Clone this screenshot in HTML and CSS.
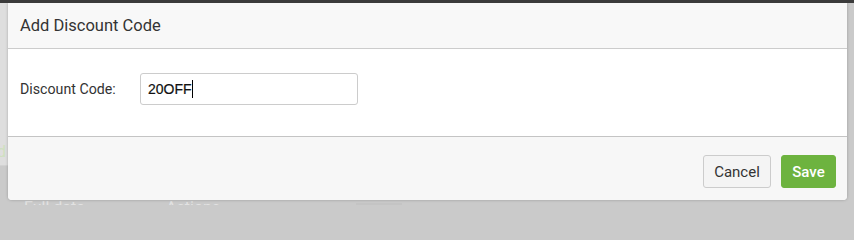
FILE: index.html
```html
<!DOCTYPE html>
<html>
<head>
<meta charset="utf-8">
<link rel="stylesheet" href="styles.css">
</head>
<body>
<div class="topbar"></div>
<div class="backdrop">
  <div class="bg-content">
    <div class="bg-row"><span class="bg-green">d</span></div>
    <div class="bg-head"><span class="bg-col1">Full date</span><span class="bg-col2">Actions</span><span class="bg-block"></span></div>
  </div>
  <div class="modal">
    <div class="modal-header">Add Discount Code</div>
    <div class="modal-body">
      <label class="field-label" for="code">Discount Code:</label>
      <div class="input"><span class="input-text">20OFF</span><span class="caret"></span></div>
    </div>
    <div class="modal-footer">
      <button class="btn btn-cancel">Cancel</button>
      <button class="btn btn-save">Save</button>
    </div>
  </div>
</div>
</body>
</html>
```
FILE: styles.css
```css
html, body {
  margin: 0;
  padding: 0;
}
html {
  height: 205px;
  overflow: hidden;
  background: #cacaca;
}
body {
  width: 854px;
  height: 205px;
  overflow: hidden;
  background: #cacaca;
  font-family: Roboto, "Liberation Sans", sans-serif;
}
.topbar {
  height: 3px;
  background: #3b3b3b;
}
.backdrop {
  position: relative;
  height: 202px;
  overflow: hidden;
  background: #cacaca;
}
.bg-content {
  height: 100%;
}
.bg-row {
  height: 162px;
  width: 8px;
  background: #dedede;
  border-bottom: 1px solid #d2d2d2;
  display: flex;
  align-items: flex-end;
  overflow: hidden;
}
.bg-green {
  color: #cfe0c0;
  font-size: 16px;
  line-height: 16px;
  margin-left: -3px;
  margin-bottom: 5px;
}
.bg-head {
  display: flex;
  align-items: flex-start;
  padding-top: 34px;
  color: #e2e2e2;
  font-size: 16px;
  line-height: 16px;
}
.bg-col1 {
  margin-left: 24px;
  width: 142px;
}
.bg-col2 {
  width: 190px;
}
.bg-block {
  width: 46px;
  height: 10px;
  margin-top: 3px;
  background: #c4c4c4;
}
.modal {
  position: absolute;
  left: 8px;
  top: 0;
  width: 839px;
  height: 197px;
  background: #f7f7f7;
  border-radius: 0 0 4px 4px;
  box-shadow: 0 0 3px rgba(0,0,0,0.25);
  display: flex;
  flex-direction: column;
}
.modal-header {
  height: 46px;
  box-sizing: border-box;
  border-bottom: 1px solid #cccccc;
  padding: 13px 0 0 12px;
  font-size: 16.5px;
  line-height: 20px;
  color: #333333;
  background: #f8f8f8;
}
.modal-body {
  height: 88px;
  box-sizing: border-box;
  background: #ffffff;
  border-bottom: 1px solid #c4c4c4;
  display: flex;
  align-items: flex-start;
  padding: 24px 0 0 12px;
}
.field-label {
  width: 120px;
  font-size: 14.2px;
  line-height: 32px;
  color: #333333;
}
.input {
  width: 218px;
  height: 32px;
  box-sizing: border-box;
  border: 1px solid #cccccc;
  border-radius: 3px;
  display: flex;
  align-items: center;
  padding-left: 7px;
  font-family: "Liberation Sans", Arial, sans-serif;
  font-size: 14px;
  color: #111111;
  -webkit-text-stroke: 0.2px #111;
}
.caret {
  display: inline-block;
  width: 1px;
  height: 18px;
  background: #000;
}
.modal-footer {
  flex: 1;
  display: flex;
  justify-content: flex-end;
  align-items: flex-start;
  gap: 10px;
  padding: 18px 11px 0 0;
  background: #f7f7f7;
  border-radius: 0 0 4px 4px;
}
.btn {
  height: 33px;
  box-sizing: border-box;
  font-family: Roboto, "Liberation Sans", sans-serif;
  font-size: 15px;
  border-radius: 3px;
  cursor: pointer;
  line-height: 20px;
}
.btn-cancel {
  width: 68px;
  background: #f4f4f4;
  border: 1px solid #cccccc;
  color: #333333;
}
.btn-save {
  width: 55px;
  background: #6db33f;
  border: 1px solid #6db33f;
  color: #ffffff;
  font-weight: 500;
}
```
